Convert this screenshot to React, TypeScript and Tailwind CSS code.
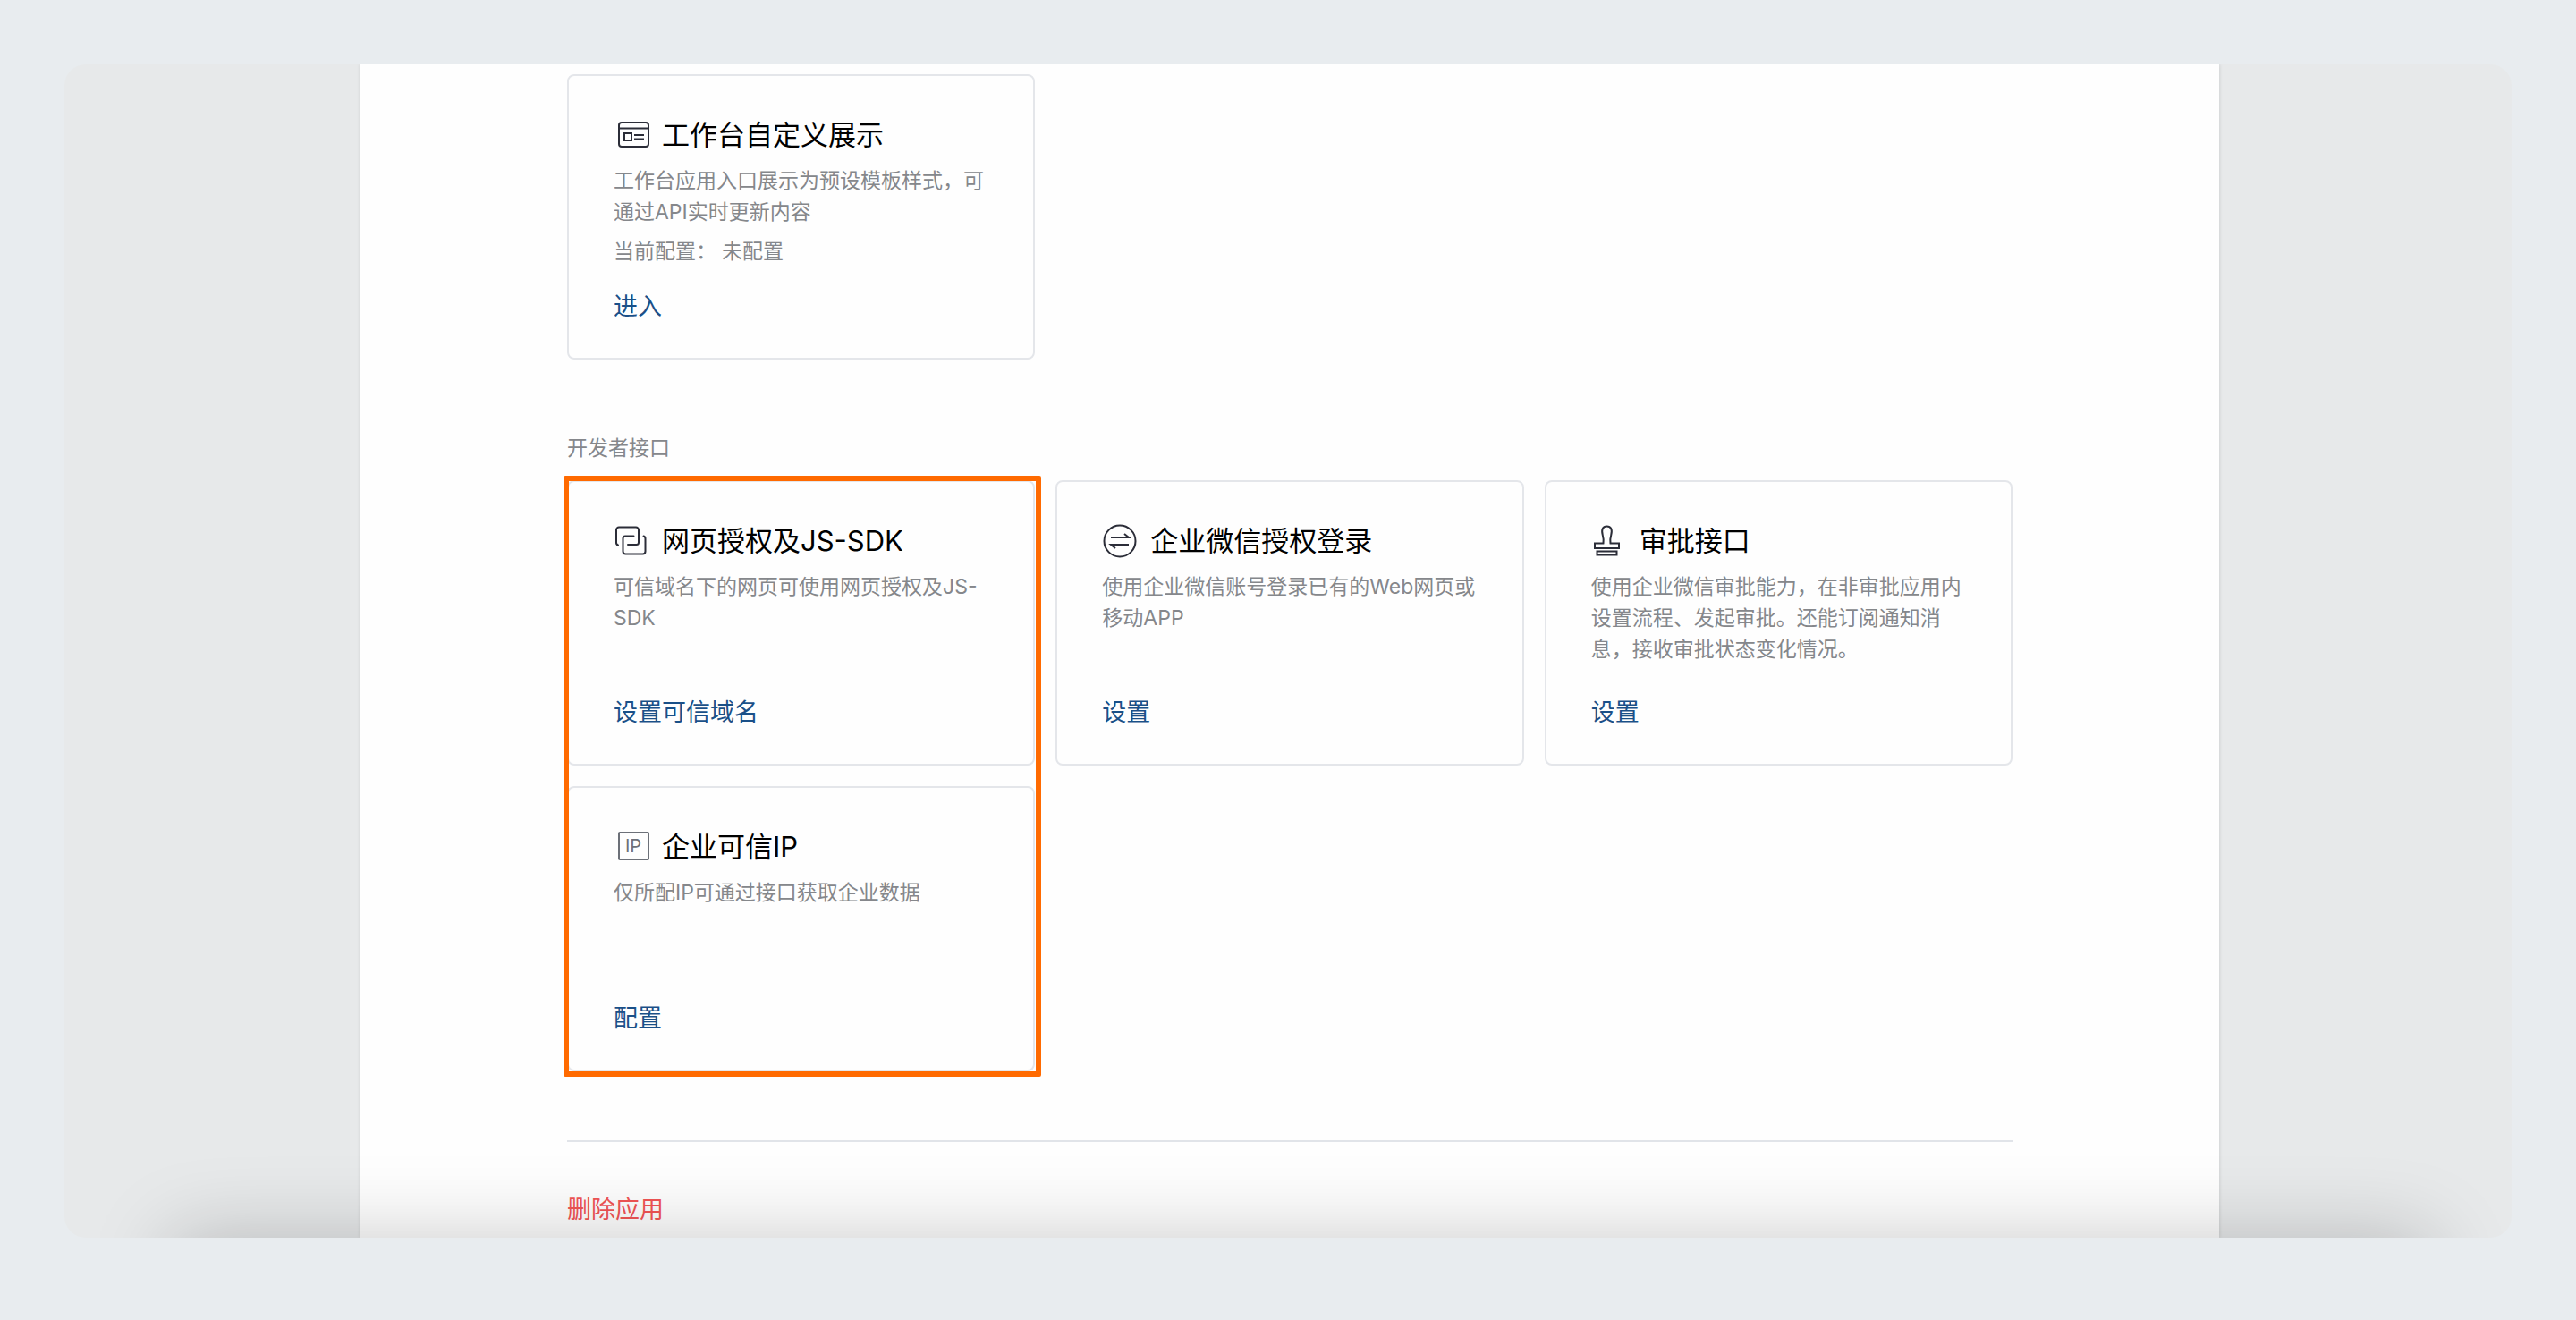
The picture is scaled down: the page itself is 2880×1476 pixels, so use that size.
import type { ReactNode } from "react";

type CardProps = {
  icon: ReactNode;
  title: string;
  text: string;
  status?: string;
  action: string;
};

const iconClass = "h-10 w-10 shrink-0";

function PanelIcon() {
  return (
    <svg className={iconClass} viewBox="0 0 40 40" fill="none" stroke="#2b2d38" strokeWidth="2" aria-hidden="true">
      <rect x="6" y="6" width="33" height="27" rx="3" />
      <path d="M6 12.5h33M23 20h11M23 24.5h11" />
      <rect x="12" y="18" width="8" height="8" />
    </svg>
  );
}

function LinkedSquaresIcon() {
  return (
    <svg className={iconClass} viewBox="0 0 40 40" fill="none" stroke="#2b2d38" strokeWidth="2" strokeLinecap="round" aria-hidden="true">
      <path d="M5 24.5a3 3 0 0 1-2-3V7.5a3 3 0 0 1 3-3h19a3 3 0 0 1 3 3v14a2.5 2.5 0 0 1-2.5 2.5H16" />
      <path d="M22.5 14.5H13a2.5 2.500 0 0 0-2.5 2.5v14.500a3 3 0 0 0 3 3h19a3 3 0 0 0 3-3V17.500a3 3 0 0 0-2-3" />
    </svg>
  );
}

function ExchangeIcon() {
  return (
    <svg className={iconClass} viewBox="0 0 40 40" fill="none" stroke="#2b2d38" strokeWidth="2" aria-hidden="true">
      <circle cx="20" cy="20" r="17.5" />
      <path d="M10 16h20l-5-4M30 24H10l5 4" />
    </svg>
  );
}

function StampIcon() {
  return (
    <svg className={iconClass} viewBox="0 0 40 40" fill="none" stroke="#2b2d38" strokeWidth="2" aria-hidden="true">
      <path d="M13.5 22.5c.8-4 .2-6-.7-9C11 7 13 3.500 17.500 3.500S24 7 22.200 13.500c-.9 3-1.500 5-.7 9h9.500v5.500H4v-5.500z" />
      <path d="M6.500 31.500h22v4h-22z" />
    </svg>
  );
}

function IpIcon() {
  return (
    <svg className={iconClass} viewBox="0 0 40 40" fill="none" stroke="#6c7078" strokeWidth="2" aria-hidden="true">
      <rect x="6" y="4" width="33" height="30" rx="1" />
      <text x="22" y="26" textAnchor="middle" fontSize="20" fontFamily="Inter, sans-serif" fill="#6c7078" stroke="none">
        IP
      </text>
    </svg>
  );
}

function Card({ icon, title, text, status, action }: CardProps) {
  return (
    <article className="flex min-h-[319px] flex-col items-start rounded-lg border-2 border-[#e4e6ea] pt-11 pr-10 pb-[37px] pl-[50px]">
      <h3 className="flex items-center gap-[14px] text-[31px] leading-[44px] text-black">
        {icon}
        {title}
      </h3>
      <p className="mt-3 text-[23px] leading-[35px] text-[#85878b]">{text}</p>
      {status && (
        <p className="mt-[9px] flex gap-[6px] text-[23px] leading-[35px] text-[#85878b]">
          <span>当前配置：</span>
          <span>{status}</span>
        </p>
      )}
      <a href="#" className="mt-auto text-[27px] leading-10 text-[#1a5088]">
        {action}
      </a>
    </article>
  );
}

export default function App() {
  return (
    <div
      lang="zh-CN"
      className="min-h-screen bg-[#e8ecef] p-[72px] font-['Inter','Noto_Sans_CJK_SC',sans-serif]"
    >
      <div className="relative overflow-hidden rounded-3xl bg-[#e7e9ea] pr-[327px] pl-[331px]">
        <main className="bg-[#fefefe] px-[231px] pt-[11px] pb-[11px] shadow-[0_0_4px_rgba(0,0,0,0.15)]">
          <div className="grid grid-cols-3 gap-[23px]">
            <Card
              icon={<PanelIcon />}
              title="工作台自定义展示"
              text="工作台应用入口展示为预设模板样式，可通过API实时更新内容"
              status="未配置"
              action="进入"
            />
          </div>

          <section>
            <h2 className="mt-[82px] mb-[18px] text-[23px] leading-[35px] text-[#85878b]">开发者接口</h2>
            <div className="relative grid grid-cols-3 gap-[23px]">
              <Card
                icon={<LinkedSquaresIcon />}
                title="网页授权及JS-SDK"
                text="可信域名下的网页可使用网页授权及JS-SDK"
                action="设置可信域名"
              />
              <Card
                icon={<ExchangeIcon />}
                title="企业微信授权登录"
                text="使用企业微信账号登录已有的Web网页或移动APP"
                action="设置"
              />
              <Card
                icon={<StampIcon />}
                title="审批接口"
                text="使用企业微信审批能力，在非审批应用内设置流程、发起审批。还能订阅通知消息，接收审批状态变化情况。"
                action="设置"
              />
              <Card icon={<IpIcon />} title="企业可信IP" text="仅所配IP可通过接口获取企业数据" action="配置" />
              <div className="pointer-events-none absolute -top-[5px] -bottom-[6px] -left-1 w-[calc((100%-46px)/3+11px)] rounded-xs border-6 border-[#ff6a00]" />
            </div>
          </section>

          <hr className="mt-[77px] border-t-2 border-[#e1e4e9]" />
          <button type="button" className="mt-14 block text-[27px] leading-10 text-[#f25555]">
            删除应用
          </button>
        </main>
        <div className="pointer-events-none absolute top-full right-[90px] left-[120px] h-40 shadow-[0_0_90px_rgba(0,0,0,0.21)]" />
      </div>
    </div>
  );
}
